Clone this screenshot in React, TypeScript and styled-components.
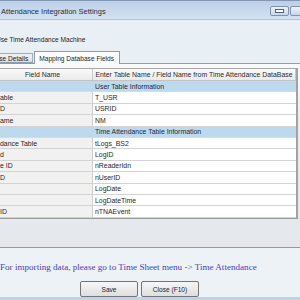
import React from "react";
import styled, { createGlobalStyle } from "styled-components";

const GlobalStyle = createGlobalStyle`
  html, body { margin: 0; padding: 0; width: 300px; height: 300px; overflow: hidden; background: #e8eef4; }
  #root { width: 300px; height: 300px; overflow: hidden; }
`;

const Viewport = styled.div`
  width: 300px;
  height: 300px;
  overflow: hidden;
  font-family: "Liberation Sans", Arial, sans-serif;
  color: #1e1e1e;
`;

const Window = styled.div`
  width: 400px;
  height: 300px;
  margin-left: -30px;
  display: flex;
  flex-direction: column;
  background: #e8eff5;
`;

const TitleBar = styled.div`
  flex: none;
  height: 18px;
  border-top: 1px solid #8297b4;
  border-bottom: 1px solid #b3c3d6;
  background: linear-gradient(#bccfe7, #d4e2f1);
  display: flex;
  align-items: center;
  padding-left: 13px;
  padding-right: 28px;
`;

const Title = styled.div`
  font-size: 7.5px;
  color: #1d2f48;
  margin-top: 2px;
  white-space: nowrap;
`;

const WinButtons = styled.div`
  margin-left: auto;
  display: flex;
  margin-top: 1px;
`;

const WinButton = styled.div<{ $w: number }>`
  width: ${(p) => p.$w}px;
  height: 10px;
  box-sizing: border-box;
  border: 1px solid #7f93ad;
  border-radius: 2px;
  background: linear-gradient(#eef3f9, #c9d7e8);
  display: flex;
  align-items: center;
  justify-content: center;
  margin-right: 1px;
`;

const CaptionRow = styled.div`
  flex: none;
  height: 12px;
  margin-top: 13px;
  margin-bottom: 6px;
  padding-left: 13px;
  display: flex;
  align-items: center;
  gap: 4px;
`;

const CheckBox = styled.div`
  width: 9px;
  height: 9px;
  box-sizing: border-box;
  border: 1px solid #7d8ca1;
  background: #fff;
`;

const CaptionText = styled.span`
  font-size: 6.6px;
  color: #1e1e1e;
  white-space: nowrap;
`;

const TabStrip = styled.div`
  flex: none;
  height: 12px;
  display: flex;
  align-items: flex-end;
  padding-left: 3px;
  position: relative;
  z-index: 1;
`;

const Tab = styled.div<{ $active?: boolean }>`
  box-sizing: border-box;
  height: ${(p) => (p.$active ? 13 : 10)}px;
  margin-bottom: ${(p) => (p.$active ? -1 : 0)}px;
  padding: 0 ${(p) => (p.$active ? 5 : 4)}px 0 4px;
  border: 1px solid ${(p) => (p.$active ? "#8b9aad" : "#a3acb8")};
  border-bottom: ${(p) => (p.$active ? "none" : "1px solid #8b9aad")};
  background: ${(p) => (p.$active ? "#fbfcfd" : "linear-gradient(#f3f3f3, #dcdfe3)")};
  font-size: 6.6px;
  display: flex;
  align-items: center;
  white-space: nowrap;
  margin-right: ${(p) => (p.$active ? 0 : 1)}px;
`;

const TabPanel = styled.div`
  flex: none;
  height: 179px;
  margin: 0 4px;
  border: 1px solid #8e9bab;
  background: linear-gradient(#f8f9fb 0%, #eceef2 30%, #e4e7ec 100%);
  padding-top: 4px;
  padding-left: 18px;
`;

const Grid = styled.div`
  width: 305px;
  box-sizing: border-box;
  border-top: 1px solid #a9a9a9;
  border-bottom: 1px solid #9a9a9a;
  border-right: 2px solid #a2a2a2;
  background: #fff;
  display: grid;
  grid-template-columns: 100px 1fr;
  font-size: 6.9px;
`;

const HeadCell = styled.div`
  height: 12px;
  box-sizing: border-box;
  background: linear-gradient(#fafafa, #eaeaea);
  border-right: 1px solid #c9c9c9;
  border-bottom: 1px solid #c3c3c3;
  display: flex;
  align-items: center;
  justify-content: center;
  white-space: nowrap;
  color: #2a2a2a;
`;

const SectionRow = styled.div`
  grid-column: 1 / 3;
  display: grid;
  grid-template-columns: 100px 1fr;
  height: 11.4px;
  box-sizing: border-box;
  background: #bdd9ee;
  border-bottom: 1px solid #d2dde6;
`;

const SectionText = styled.div`
  grid-column: 2;
  padding-left: 2px;
  display: flex;
  align-items: center;
  white-space: nowrap;
  color: #1c2836;
`;

const Cell = styled.div<{ $field?: boolean }>`
  height: 11.4px;
  box-sizing: border-box;
  padding-left: ${(p) => (p.$field ? 7 : 2)}px;
  background: ${(p) => (p.$field ? "#f1f1f1" : "#ffffff")};
  border-bottom: 1px solid #d3d3d3;
  border-right: ${(p) => (p.$field ? "1px solid #cfcfcf" : "none")};
  display: flex;
  align-items: center;
  white-space: nowrap;
  color: #262626;
`;

const Footer = styled.div`
  flex: 1;
  display: flex;
  flex-direction: column;
  background: #edf2f6;
`;

const Message = styled.div`
  font-family: "Liberation Serif", "Times New Roman", serif;
  font-size: 9.1px;
  line-height: 12px;
  color: #4a3db3;
  padding-left: 30px;
  margin-top: 13px;
  white-space: nowrap;
`;

const ButtonRow = styled.div`
  display: flex;
  gap: 3px;
  padding-left: 110px;
  margin-top: 8px;
`;

const Button = styled.button`
  width: 58px;
  height: 16px;
  box-sizing: border-box;
  padding: 0;
  border: 1px solid #747474;
  border-radius: 2px;
  background: linear-gradient(#f7f7f7, #dedede);
  font-family: "Liberation Sans", Arial, sans-serif;
  font-size: 6.6px;
  color: #222;
`;

const BottomStrip = styled.div`
  margin-top: auto;
  height: 3px;
  background: #c0d3eb;
`;

type Row = { kind: "section"; text: string } | { kind: "field"; name: string; value: string };

const rows: Row[] = [
  { kind: "section", text: "User Table Information" },
  { kind: "field", name: "able", value: "T_USR" },
  { kind: "field", name: "D", value: "USRID" },
  { kind: "field", name: "ame", value: "NM" },
  { kind: "section", text: "Time Attendance Table Information" },
  { kind: "field", name: "dance Table", value: "tLogs_BS2" },
  { kind: "field", name: "d", value: "LogID" },
  { kind: "field", name: "e ID", value: "nReaderIdn" },
  { kind: "field", name: "D", value: "nUserID" },
  { kind: "field", name: "", value: "LogDate" },
  { kind: "field", name: "", value: "LogDateTime" },
  { kind: "field", name: "ID", value: "nTNAEvent" },
];

const MinIcon = () => (
  <svg width="9" height="4" viewBox="0 0 9 4">
    <rect x="0.5" y="0.5" width="8" height="3" fill="#ffffff" stroke="#4d6283" strokeWidth="1" />
  </svg>
);

export default function App() {
  return (
    <Viewport>
      <GlobalStyle />
      <Window>
        <TitleBar>
          <Title>Time Attendance Integration Settings</Title>
          <WinButtons>
            <WinButton $w={19}>
              <MinIcon />
            </WinButton>
            <WinButton $w={19} />
            <WinButton $w={31} />
          </WinButtons>
        </TitleBar>
        <CaptionRow>
          <CheckBox />
          <CaptionText>Use Time Attendance Machine</CaptionText>
        </CaptionRow>
        <TabStrip>
          <Tab>Database Details</Tab>
          <Tab $active>Mapping Database Fields</Tab>
        </TabStrip>
        <TabPanel>
          <Grid>
            <HeadCell>Field Name</HeadCell>
            <HeadCell>Enter Table Name / Field Name from Time Attendance DataBase</HeadCell>
            {rows.map((r, i) =>
              r.kind === "section" ? (
                <SectionRow key={i}>
                  <SectionText>{r.text}</SectionText>
                </SectionRow>
              ) : (
                <React.Fragment key={i}>
                  <Cell $field>{r.name}</Cell>
                  <Cell>{r.value}</Cell>
                </React.Fragment>
              )
            )}
          </Grid>
        </TabPanel>
        <Footer>
          <Message>For importing data, please go to Time Sheet menu -&gt; Time Attendance</Message>
          <ButtonRow>
            <Button>Save</Button>
            <Button>Close (F10)</Button>
          </ButtonRow>
          <BottomStrip />
        </Footer>
      </Window>
    </Viewport>
  );
}
